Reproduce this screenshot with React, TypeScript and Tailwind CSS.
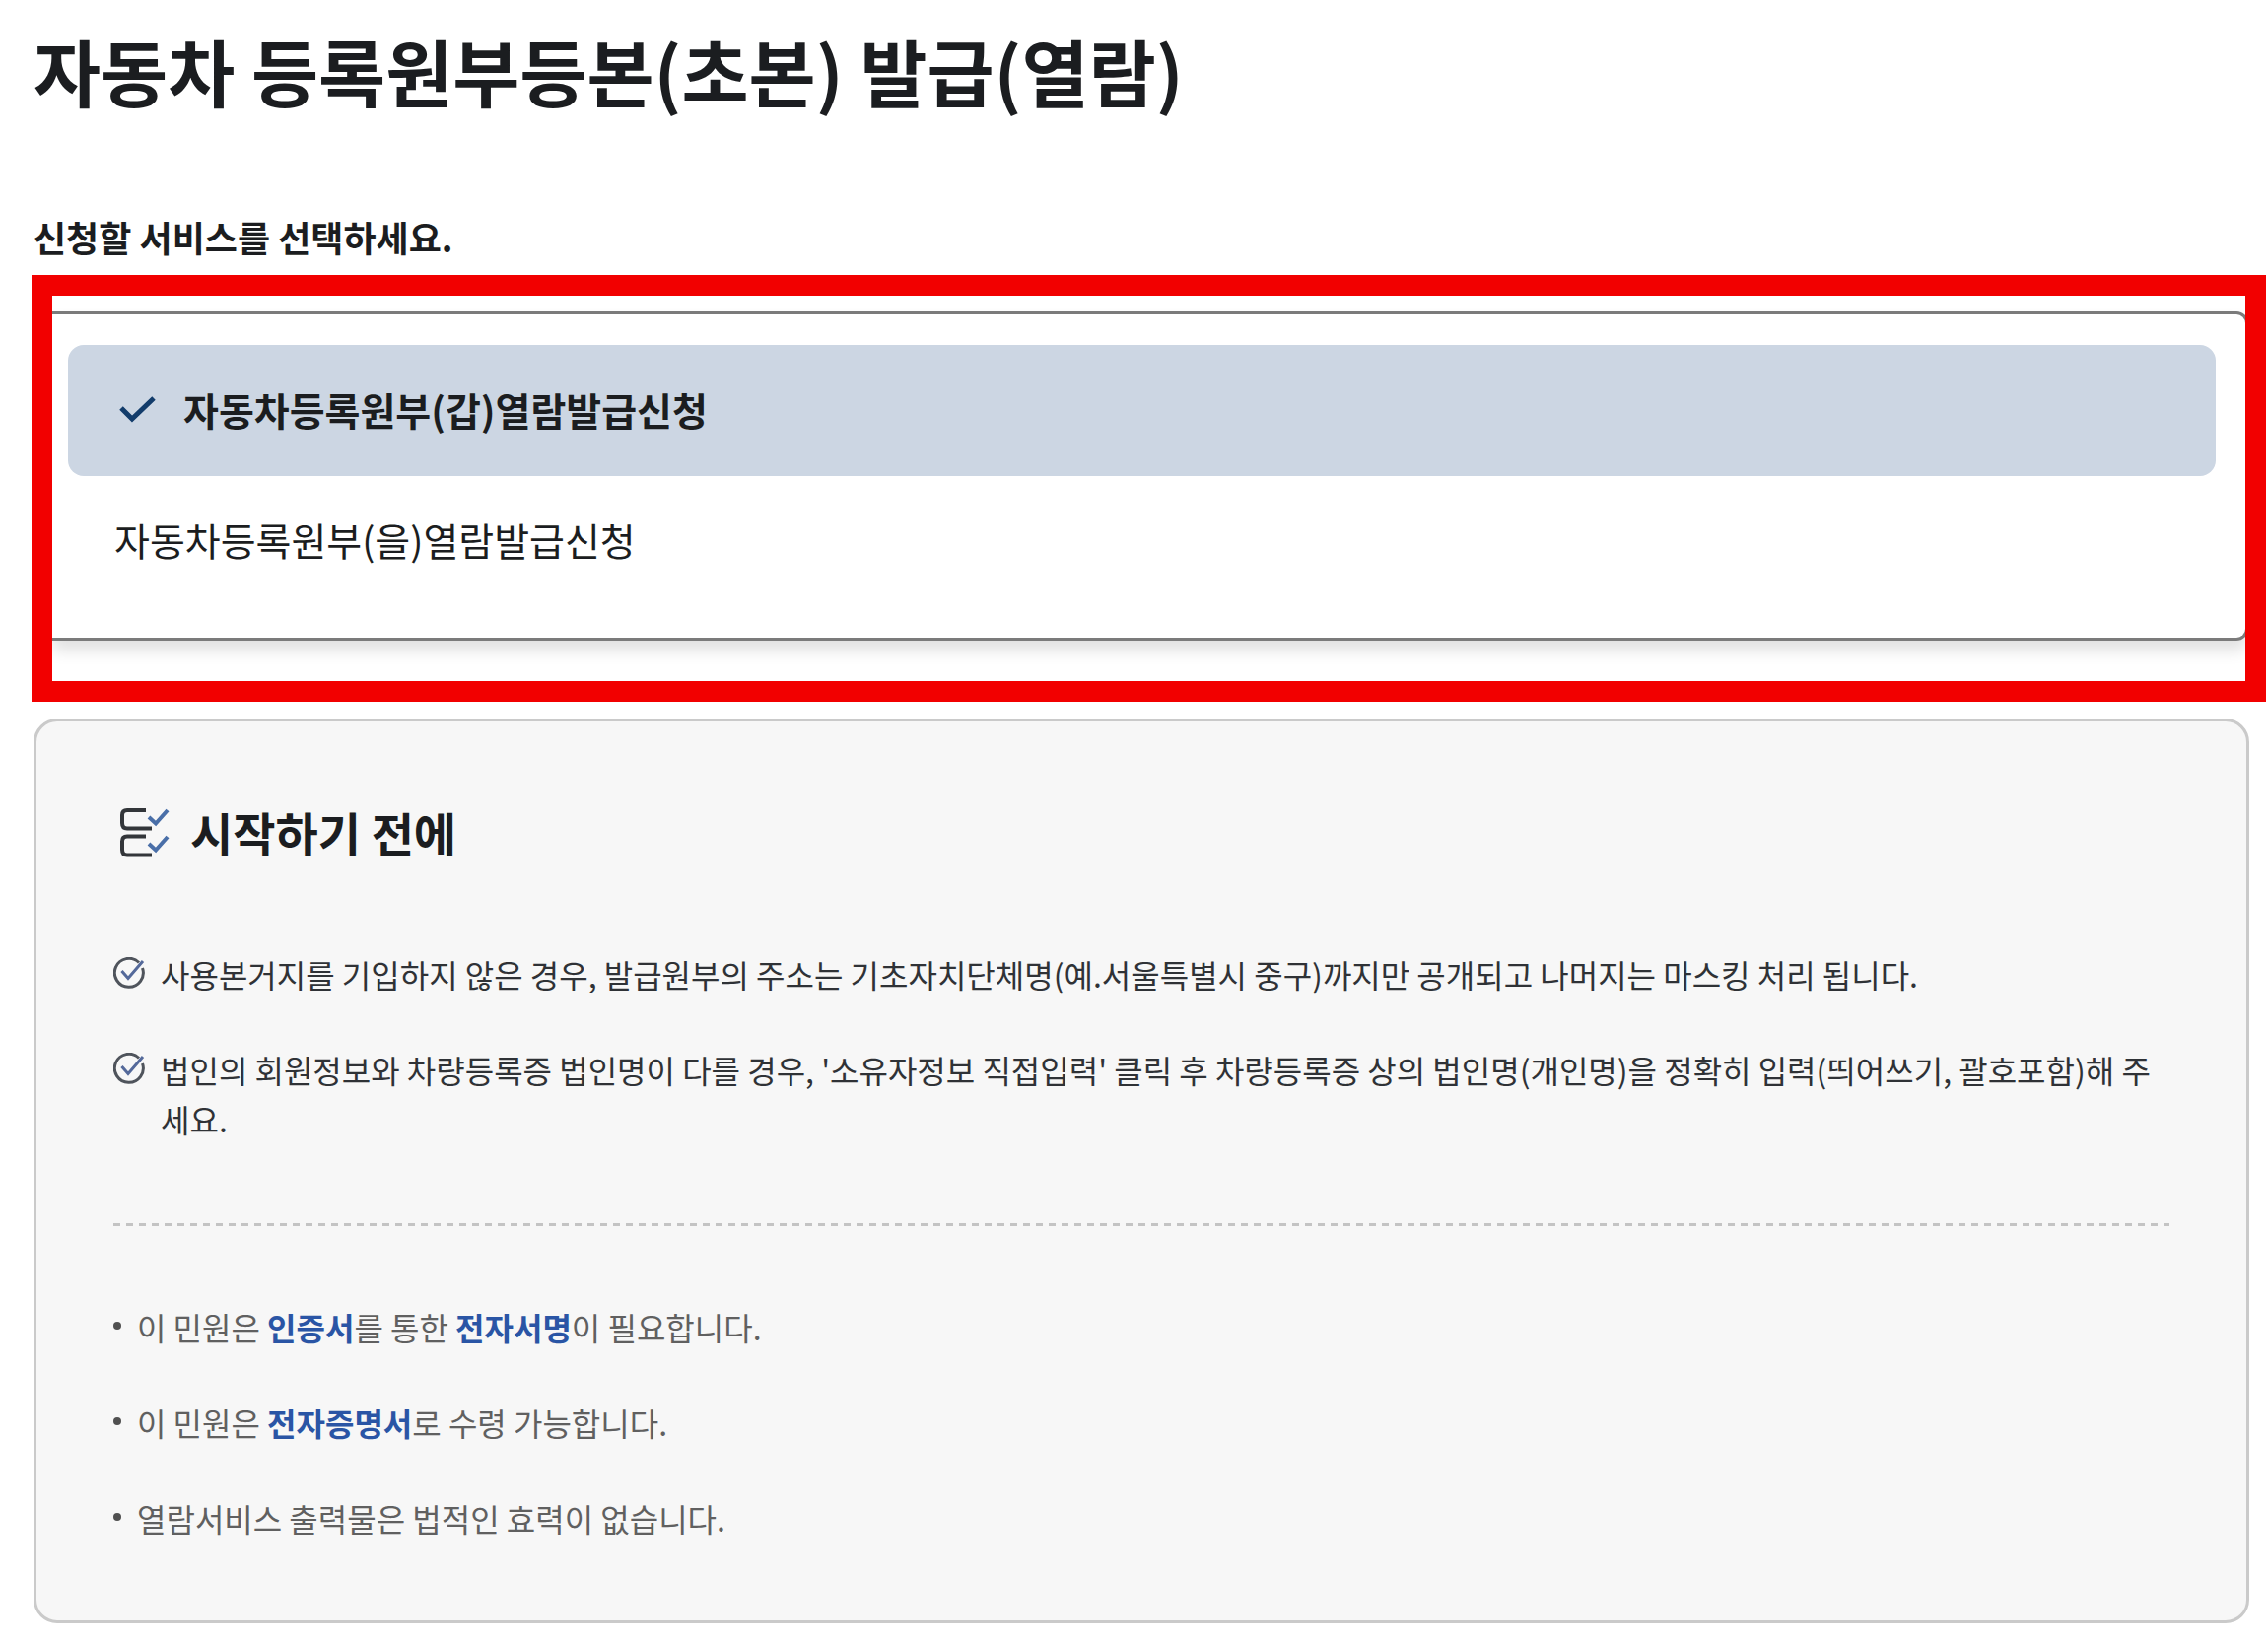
import { useState } from "react";

const services = ["자동차등록원부(갑)열람발급신청", "자동차등록원부(을)열람발급신청"];

const notices = [
  "사용본거지를 기입하지 않은 경우, 발급원부의 주소는 기초자치단체명(예.서울특별시 중구)까지만 공개되고 나머지는 마스킹 처리 됩니다.",
  "법인의 회원정보와 차량등록증 법인명이 다를 경우, '소유자정보 직접입력' 클릭 후 차량등록증 상의 법인명(개인명)을 정확히 입력(띄어쓰기, 괄호포함)해 주세요.",
];

function SelectedIcon() {
  return (
    <svg className="h-[30px] w-[38px] shrink-0" viewBox="0 0 38 30" fill="none" aria-hidden="true">
      <path d="M3 14 L14 25 L36 4" stroke="#123c6b" strokeWidth="5" />
    </svg>
  );
}

function ChecklistIcon() {
  return (
    <svg className="h-[52px] w-[52px] shrink-0" viewBox="0 0 52 52" fill="none" aria-hidden="true">
      <path
        d="M28 4 H9 Q4 4 4 9 V17 Q4 22.500 9 22.500 H34 M28 30.500 H9 Q4 30.500 4 35.500 V44 Q4 49.500 9 49.500 H34"
        stroke="#33363a"
        strokeWidth="4"
      />
      <path d="M31 11 L38 17.500 L50 4 M31 38 L38 44.500 L50 31" stroke="#4a6fa8" strokeWidth="4" />
    </svg>
  );
}

function CircleCheckIcon() {
  return (
    <svg className="mt-2 h-8 w-8 shrink-0" viewBox="0 0 32 32" fill="none" aria-hidden="true">
      <path d="M29.500 11 A14.500 14.500 0 1 1 26 5.500" stroke="#4f545c" strokeWidth="3" />
      <path d="M8.500 14 L15 21.500 L30 4" stroke="#54699a" strokeWidth="3" />
    </svg>
  );
}

function Key({ children }: { children: string }) {
  return <strong className="font-bold text-[#2a55a5]">{children}</strong>;
}

export default function App() {
  const [selected, setSelected] = useState(0);

  return (
    <main className="min-h-screen bg-white pt-[26px] pb-5 font-['Noto_Sans_CJK_KR',sans-serif] text-[#1b1d20]">
      <h1 className="pl-[34px] text-[74px] leading-[90px] font-bold">자동차 등록원부등본(초본) 발급(열람)</h1>
      <h2 id="service-label" className="mt-[99px] pl-[34px] text-[36px] leading-[50px] font-bold">
        신청할 서비스를 선택하세요.
      </h2>

      <section className="mt-[14px] mr-[2px] ml-8 overflow-hidden border-[21px] border-[#f20000] pt-4 pb-[41px]">
        <div
          role="listbox"
          aria-labelledby="service-label"
          className="-mr-[3px] rounded-r-xl border-y-[3px] border-r-[3px] border-[#7b7b7b] pt-[31px] pr-[30px] pb-[31px] pl-4 shadow-[0_10px_16px_rgba(0,0,0,0.12)]"
        >
          {services.map((name, i) => (
            <button
              key={name}
              type="button"
              role="option"
              aria-selected={selected === i}
              onClick={() => setSelected(i)}
              className={
                selected === i
                  ? "flex h-[133px] w-full items-center gap-7 rounded-2xl bg-[#ccd6e3] px-[51px] pb-1 text-left text-[39px] leading-[50px] font-bold"
                  : "flex h-[133px] w-full items-center gap-7 rounded-2xl px-[47px] pb-1.5 text-left text-[39px] leading-[50px]"
              }
            >
              {selected === i && <SelectedIcon />}
              {name}
            </button>
          ))}
        </div>
      </section>

      <section className="mt-[17px] mr-[19px] ml-[34px] rounded-3xl border-[3px] border-[#cacaca] bg-[#f7f7f7] px-[78px] pt-[82px] pb-[79px]">
        <h2 className="flex items-center gap-[21px] pl-[5px] text-[47px] leading-[60px] font-bold">
          <ChecklistIcon />
          시작하기 전에
        </h2>
        <ul className="mt-[89px] flex flex-col gap-[47px] text-[32px] leading-[50px] text-[#2f3236]">
          {notices.map((text) => (
            <li key={text} className="flex gap-4">
              <CircleCheckIcon />
              <p>{text}</p>
            </li>
          ))}
        </ul>
        <hr className="mt-[81px] h-[3px] border-0 bg-[repeating-linear-gradient(to_right,#c4c4c4_0_7px,transparent_7px_13px)]" />
        <ul className="mt-[77px] flex flex-col gap-[47px] text-[32px] leading-[50px] text-[#606060]">
          <li className="flex gap-4">
            <span className="mt-5 h-2 w-2 shrink-0 rounded-full bg-[#505050]" />
            <p>
              이 민원은 <Key>인증서</Key>를 통한 <Key>전자서명</Key>이 필요합니다.
            </p>
          </li>
          <li className="flex gap-4">
            <span className="mt-5 h-2 w-2 shrink-0 rounded-full bg-[#505050]" />
            <p>
              이 민원은 <Key>전자증명서</Key>로 수령 가능합니다.
            </p>
          </li>
          <li className="flex gap-4">
            <span className="mt-5 h-2 w-2 shrink-0 rounded-full bg-[#505050]" />
            <p>열람서비스 출력물은 법적인 효력이 없습니다.</p>
          </li>
        </ul>
      </section>
    </main>
  );
}
